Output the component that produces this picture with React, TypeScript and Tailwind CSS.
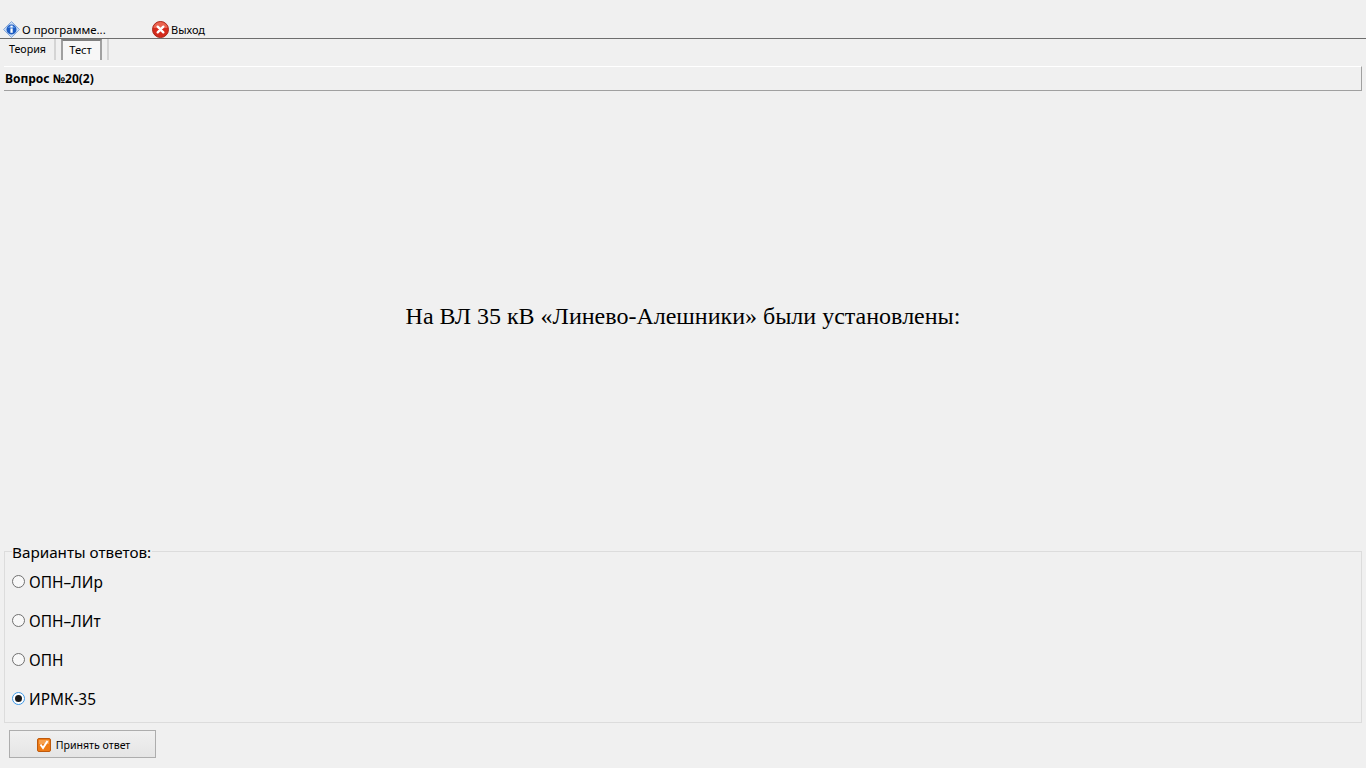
function InfoIcon() {
  return (
    <svg width="17" height="17" viewBox="0 0 17 17" className="shrink-0">
      <path d="M8.5.5 16.5 8.5 8.5 16.5 .5 8.5Z" fill="#c7d9f2" stroke="#86a9da" strokeWidth="1" />
      <circle cx="8.5" cy="8.5" r="5" fill="#1c5cc2" />
      <path d="M4.5 7a4.5 4 0 0 1 8 0Z" fill="#4f8ae0" />
      <rect x="7.4" y="7.4" width="2.3" height="4.4" fill="#fff" />
      <rect x="7.4" y="4.6" width="2.3" height="1.9" fill="#fff" />
    </svg>
  )
}

function ExitIcon() {
  return (
    <svg width="17" height="17" viewBox="0 0 17 17" className="shrink-0">
      <circle cx="8.5" cy="8.5" r="8" fill="#d42a1c" stroke="#a8281a" strokeWidth="1" />
      <path d="M1.5 7a7 6 0 0 1 14 0Z" fill="#ea6450" />
      <path d="M5.7 5.7l5.6 5.6M11.3 5.7l-5.6 5.6" stroke="#fff" strokeWidth="2.4" strokeLinecap="round" />
    </svg>
  )
}

function CheckIcon() {
  return (
    <svg width="14" height="14" viewBox="0 0 14 14" className="shrink-0">
      <rect x=".5" y=".5" width="13" height="13" rx="1.5" fill="#ee7a14" stroke="#bf5a0c" />
      <path d="M2 2h10v4H2Z" fill="#f6a04e" />
      <path d="M3.5 6.5l2.5 3.5 4.5-7" fill="none" stroke="#fff" strokeWidth="2" />
    </svg>
  )
}

function Radio({ label, checked }: { label: string; checked?: boolean }) {
  return (
    <div className="flex h-[39px] items-center gap-[4px]">
      <span
        className={
          checked
            ? "flex h-[13px] w-[13px] items-center justify-center rounded-full border border-[#3b97e6] bg-white"
            : "h-[13px] w-[13px] rounded-full border border-[#707070] bg-[#f8f8f8]"
        }
      >
        {checked && <span className="h-[7px] w-[7px] rounded-full bg-[#1a1a1a]" />}
      </span>
      <span className="mt-[2px] text-[15.4px] leading-none text-black">{label}</span>
    </div>
  )
}

export default function App() {
  return (
    <div className="flex h-[768px] w-[1366px] flex-col overflow-hidden bg-[#f0f0f0] font-['Noto_Sans',sans-serif] text-black">
      <div className="flex h-[39px] items-end border-b border-[#6d6d6d] pl-[3px] leading-[15px]">
        <div className="flex w-[149px] items-center gap-[2px] text-[11.45px]">
          <InfoIcon />
          <span className="mb-[1px]">О программе...</span>
        </div>
        <div className="flex items-center gap-[2px] text-[11px]">
          <ExitIcon />
          <span className="mb-[1px]">Выход</span>
        </div>
      </div>

      <div className="flex h-[21px] leading-none">
        <div className="flex w-[56px] items-center justify-center border-r-2 border-[#d4d4d4] pl-[1px] text-[10.7px]">Теория</div>
        <div className="ml-[5px] flex w-[41px] items-center justify-center border-2 border-b-0 border-[#a0a0a0] border-t-[#808080] bg-[#f7f7f7] pr-[2px] pb-[2px] text-[11.2px]">
          Тест
        </div>
        <div className="ml-[5px] w-[2px] bg-[#d4d4d4]" />
      </div>

      <div className="mt-[6px] ml-[4px] flex h-[25px] w-[1358px] items-center border-t border-r border-b border-t-white border-r-[#a0a0a0] border-b-[#a0a0a0] pt-[1px] pl-[1px] text-[12px] font-bold">
        Вопрос №20(2)
      </div>

      <div className="flex h-[450px] items-center justify-center font-['Liberation_Serif',serif] text-[24px] leading-none">
        На ВЛ 35 кВ «Линево-Алешники» были установлены:
      </div>

      <div className="relative ml-[4px] mt-[10px] h-[172px] w-[1358px] border border-[#dcdcdc] pl-[7px] pt-[10px]">
        <span className="absolute top-[-10px] left-[7px] bg-[#f0f0f0] pr-[1px] text-[15.25px] leading-[20px]">Варианты ответов:</span>
        <Radio label="ОПН–ЛИр" />
        <Radio label="ОПН–ЛИт" />
        <Radio label="ОПН" />
        <Radio label="ИРМК-35" checked />
      </div>

      <button
        type="button"
        className="mt-[7px] ml-[9px] flex h-[28px] w-[147px] items-center justify-center gap-[5px] border border-[#adadad] bg-gradient-to-b from-[#f0f0f0] to-[#e5e5e5] pt-[1px] pl-[2px] text-[10.6px]"
      >
        <CheckIcon />
        <span className="mt-[2px]">Принять ответ</span>
      </button>
    </div>
  )
}
